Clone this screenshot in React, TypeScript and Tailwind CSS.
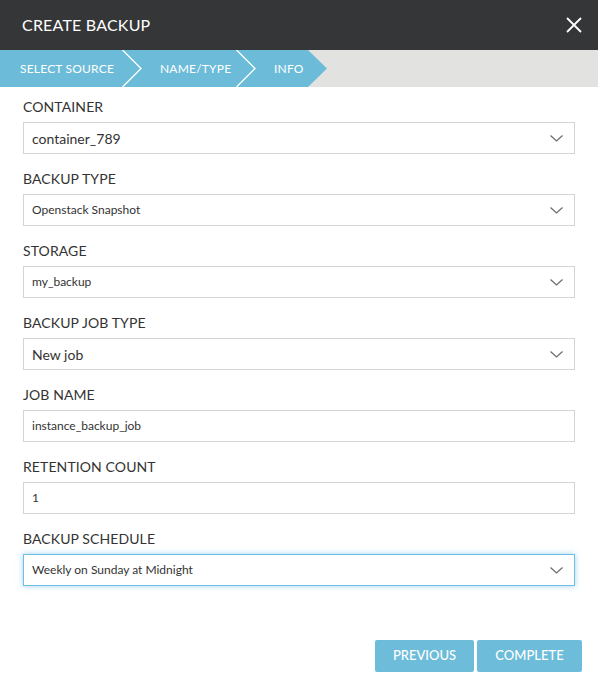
import React from 'react';

interface Field {
    label: string;
    value: string;
    select?: boolean;
    small?: boolean;
    focused?: boolean;
}

const fields: Field[] = [
    { label: 'CONTAINER', value: 'container_789', select: true },
    { label: 'BACKUP TYPE', value: 'Openstack Snapshot', select: true, small: true },
    { label: 'STORAGE', value: 'my_backup', select: true, small: true },
    { label: 'BACKUP JOB TYPE', value: 'New job', select: true },
    { label: 'JOB NAME', value: 'instance_backup_job', small: true },
    { label: 'RETENTION COUNT', value: '1', small: true },
    { label: 'BACKUP SCHEDULE', value: 'Weekly on Sunday at Midnight', select: true, small: true, focused: true },
];

const Chevron = () => (
    <svg width="13" height="7" viewBox="0 0 13 7" className="shrink-0">
        <polyline points="0.5,0.5 6.5,6 12.5,0.5" fill="none" stroke="#6b6b6b" strokeWidth="1.2" />
    </svg>
);

const StepSeparator = () => (
    <svg width="20" height="37" viewBox="0 0 20 37" className="shrink-0 mr-[18px]">
        <polyline points="0.5,0 19,18.5 0.5,37" fill="none" stroke="#ffffff" strokeWidth="1.3" />
    </svg>
);

const App = () => {
    return (
        <div
            className="w-[598px] h-[687px] bg-white flex flex-col"
            style={{ fontFamily: 'Lato, "Open Sans", sans-serif' }}
        >
            {/* Header */}
            <div className="h-[50px] bg-[#353638] flex items-center justify-between pl-[22px] pr-[16px]">
                <h1 className="text-white text-[16px] tracking-[0.2px]">CREATE BACKUP</h1>
                <svg width="16" height="16" viewBox="0 0 16 16">
                    <path d="M1 1 L15 15 M15 1 L1 15" stroke="#ffffff" strokeWidth="1.8" />
                </svg>
            </div>

            {/* Steps */}
            <div className="h-[37px] bg-[#e2e2e0] flex">
                <div className="bg-[#6cbcd9] flex items-center pl-[20px] w-[308px] text-white text-[12px] tracking-[0.2px] whitespace-nowrap">
                    <span className="w-[102px] shrink-0">SELECT SOURCE</span>
                    <StepSeparator />
                    <span className="w-[76px] shrink-0">NAME/TYPE</span>
                    <StepSeparator />
                    <span>INFO</span>
                </div>
                <svg width="19" height="37" viewBox="0 0 19 37" className="shrink-0">
                    <polygon points="0,0 19,18.5 0,37" fill="#6cbcd9" />
                </svg>
            </div>

            {/* Form */}
            <div className="flex-1 flex flex-col px-[23px] pt-[9px]">
                {fields.map((f) => (
                    <div key={f.label} className="flex flex-col mb-[14px]">
                        <label className="text-[14px] leading-[22px] text-[#333] tracking-[0.1px]">{f.label}</label>
                        <div
                            className={`mt-[4px] h-[32px] flex items-center justify-between pl-[8px] pr-[11px] border ${
                                f.focused
                                    ? 'border-[#6cbfe2] shadow-[0_0_6px_rgba(102,180,225,0.6)]'
                                    : 'border-[#d4d4d4]'
                            }`}
                        >
                            <span className={`text-[#333] ${f.small ? 'text-[12px]' : 'text-[14px]'}`}>{f.value}</span>
                            {f.select && <Chevron />}
                        </div>
                    </div>
                ))}
            </div>

            {/* Footer */}
            <div className="flex justify-end gap-[3px] pr-[16px] pb-[15px]">
                <button className="w-[99px] h-[32px] bg-[#6dbcd9] text-white text-[13px] font-medium rounded-[2px]">PREVIOUS</button>
                <button className="w-[105px] h-[32px] bg-[#6dbcd9] text-white text-[13px] font-medium rounded-[2px]">COMPLETE</button>
            </div>
        </div>
    );
};

export default App;
